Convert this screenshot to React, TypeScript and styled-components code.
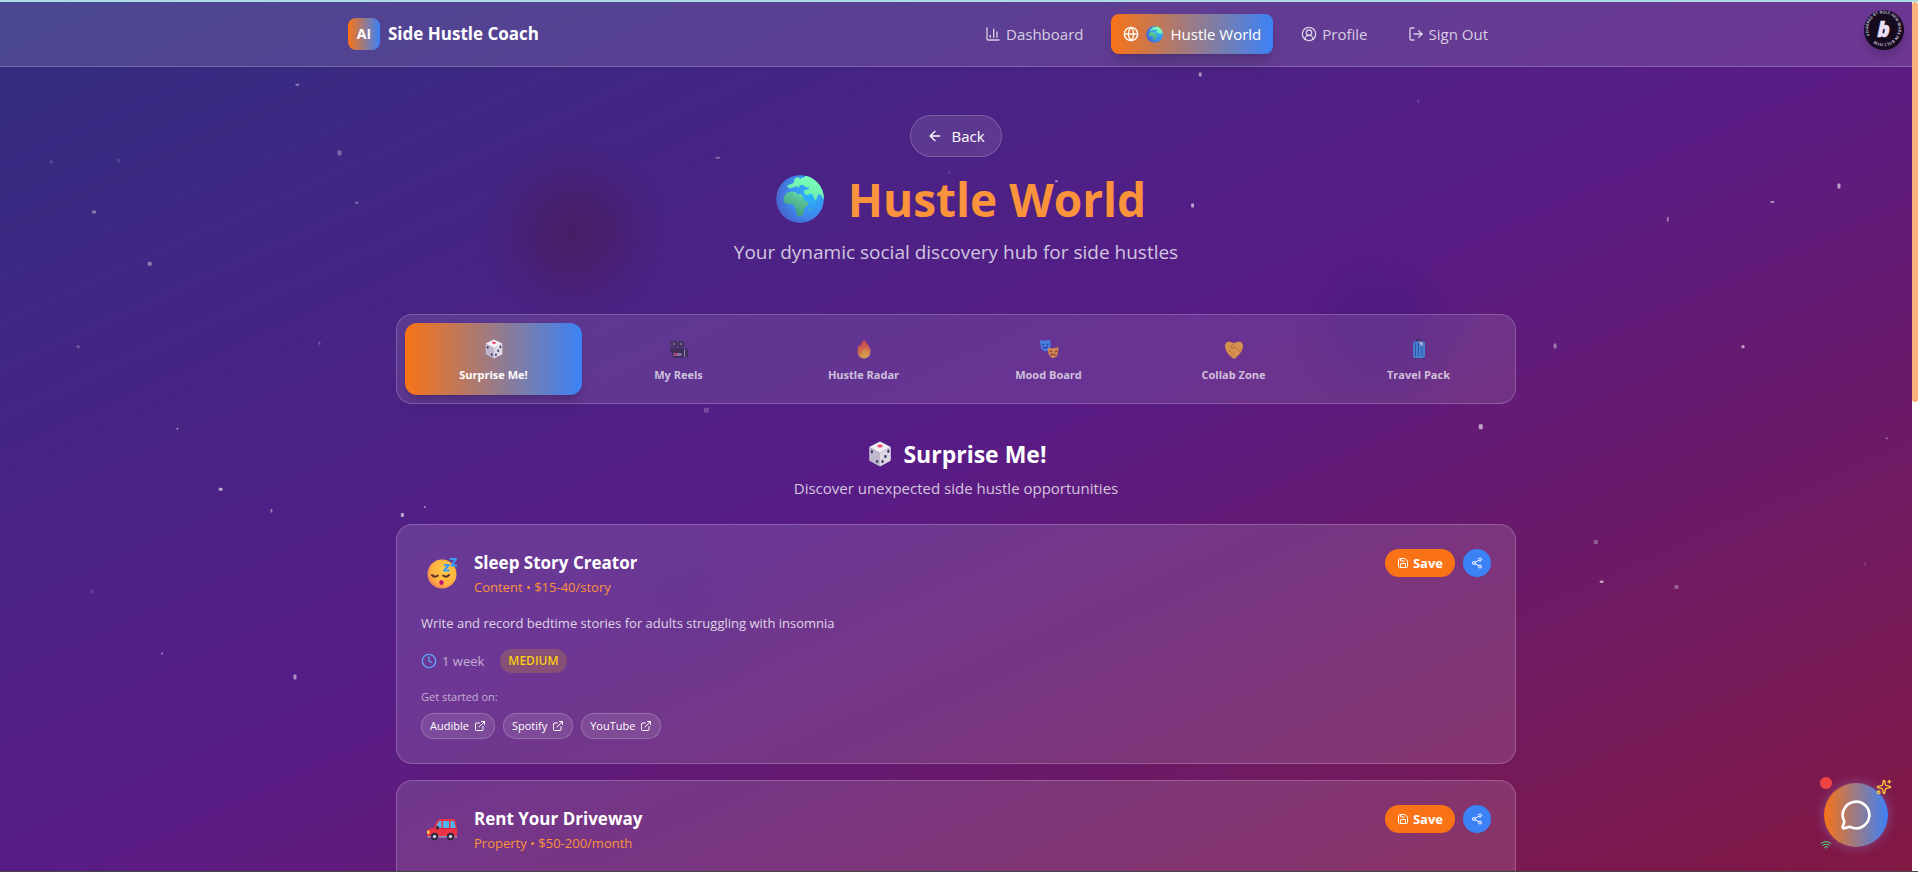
import React from "react";
import styled, { createGlobalStyle, css } from "styled-components";
import {
  ArrowLeft,
  ChartColumn,
  CircleUserRound,
  Clock,
  ExternalLink,
  Globe,
  LogOut,
  MessageCircle,
  Save,
  Share2,
  Sparkles,
  Wifi,
} from "lucide-react";

const GlobalStyle = createGlobalStyle`
  *, *::before, *::after { box-sizing: border-box; }
  body {
    margin: 0;
    color: #fff;
    background: #581c87;
    font-family: "Open Sans", "Noto Sans", sans-serif;
    font-size: 15px;
    line-height: 24px;
  }
  h1, h2, h3, p, ul { margin: 0; padding: 0; }
  button { font: inherit; color: inherit; border: 0; cursor: pointer; }
  a { color: inherit; text-decoration: none; }
  svg { flex-shrink: 0; }
`;

const accent = "linear-gradient(to right, #f97316, #3b82f6)";

/* ---------- page shell ---------- */

const Shell = styled.div`
  position: relative;
  height: 100vh;
  overflow: hidden;
  padding-right: 6px;
  border-top: 2px solid #acdbe2;
  border-bottom: 1px solid #454545;
  background: linear-gradient(to bottom right, #312e81, #581c87, #831843);
`;

const ScrollTrack = styled.div`
  position: absolute;
  inset: 0 0 0 auto;
  width: 6px;
  background: #fff;
`;

const ScrollThumb = styled.div`
  height: 46%;
  border-radius: 3px;
  background: #fdb17c;
`;

const Sky = styled.svg`
  position: absolute;
  inset: 0;
  width: 100%;
  height: 100%;
`;

/* ---------- header ---------- */

const Header = styled.header`
  position: relative;
  background: rgba(255, 255, 255, 0.12);
  border-bottom: 1px solid rgba(255, 255, 255, 0.2);
`;

const HeaderInner = styled.div`
  display: flex;
  align-items: center;
  justify-content: space-between;
  height: 64px;
  max-width: 1280px;
  margin: 0 auto;
  padding: 0 96px 0 32px;
`;

const Brand = styled.a`
  display: flex;
  align-items: center;
  gap: 8px;
  font-size: 17px;
  font-weight: 700;
`;

const BrandMark = styled.span`
  display: grid;
  place-items: center;
  width: 32px;
  height: 32px;
  border-radius: 8px;
  background: ${accent};
  font-size: 14px;
`;

const Nav = styled.nav`
  display: flex;
  gap: 16px;
`;

const NavLink = styled.a<{ $active?: boolean }>`
  display: flex;
  align-items: center;
  gap: 5px;
  height: 40px;
  padding: 0 12px;
  border-radius: 8px;
  color: rgba(255, 255, 255, 0.75);
  ${(p) =>
    p.$active &&
    css`
      gap: 7px;
      color: #fff;
      background: ${accent};
      box-shadow: 0 10px 15px -3px rgba(0, 0, 0, 0.15), 0 4px 6px -4px rgba(0, 0, 0, 0.15);
    `}
`;

/* ---------- hero ---------- */

const Main = styled.main`
  position: relative;
  display: flex;
  flex-direction: column;
  align-items: center;
  max-width: 1152px;
  margin: 0 auto;
  padding: 48px 16px;
`;

const BackButton = styled.button`
  display: flex;
  align-items: center;
  gap: 8px;
  height: 42px;
  padding: 0 16px;
  border: 1px solid rgba(255, 255, 255, 0.2);
  border-radius: 21px;
  background: rgba(255, 255, 255, 0.1);
`;

const Title = styled.h1`
  display: flex;
  align-items: center;
  gap: 24px;
  margin-top: 14px;
  padding-left: 10px;
  color: #fb923c;
  font-size: 46px;
  line-height: 56px;
  font-weight: 700;
`;

const Tagline = styled.p`
  margin: 11px 0 48px;
  color: rgba(255, 255, 255, 0.75);
  font-size: 19px;
  line-height: 28px;
`;

/* ---------- tabs ---------- */

const Tabs = styled.div`
  display: grid;
  grid-template-columns: repeat(6, 1fr);
  gap: 8px;
  width: 100%;
  padding: 8px;
  border: 1px solid rgba(255, 255, 255, 0.2);
  border-radius: 16px;
  background: rgba(255, 255, 255, 0.1);
`;

const Tab = styled.button<{ $active?: boolean }>`
  display: flex;
  flex-direction: column;
  align-items: center;
  gap: 4px;
  padding: 12px;
  border-radius: 12px;
  background: none;
  font-size: 11px;
  line-height: 16px;
  font-weight: 700;
  color: rgba(255, 255, 255, 0.7);
  svg {
    opacity: 0.75;
  }
  ${(p) =>
    p.$active &&
    css`
      color: #fff;
      background: ${accent};
      box-shadow: 0 10px 15px -3px rgba(0, 0, 0, 0.15), 0 4px 6px -4px rgba(0, 0, 0, 0.15);
      svg {
        opacity: 1;
      }
    `}
`;

const TabIcon = styled.span`
  display: grid;
  place-items: center;
  height: 28px;
`;

/* ---------- section and cards ---------- */

const SectionTitle = styled.h2`
  display: flex;
  align-items: center;
  gap: 10px;
  margin-top: 32px;
  padding-left: 2px;
  font-size: 23px;
  line-height: 36px;
`;

const SectionText = styled.p`
  margin: 4px 0 24px;
  color: rgba(255, 255, 255, 0.75);
`;

const CardList = styled.div`
  display: grid;
  gap: 16px;
  width: 100%;
`;

const Card = styled.article`
  display: flex;
  flex-direction: column;
  gap: 16px;
  min-height: 240px;
  padding: 24px;
  border: 1px solid rgba(255, 255, 255, 0.2);
  border-radius: 16px;
  background: rgba(255, 255, 255, 0.12);
`;

const CardHeader = styled.div`
  display: flex;
  align-items: flex-start;
  gap: 8px;
`;

const CardEmoji = styled.span`
  display: grid;
  place-items: center;
  width: 41px;
  height: 48px;
  margin-right: 4px;
`;

const CardHeading = styled.div`
  flex: 1;
`;

const CardTitle = styled.h3`
  font-size: 17px;
  line-height: 28px;
`;

const CardMeta = styled.p`
  color: #fb923c;
  font-size: 13px;
  line-height: 20px;
`;

const SaveButton = styled.button`
  display: flex;
  align-items: center;
  gap: 4px;
  height: 28px;
  padding: 0 12px;
  border-radius: 14px;
  background: #f97316;
  font-size: 13px;
  font-weight: 700;
`;

const ShareButton = styled.button`
  display: grid;
  place-items: center;
  width: 28px;
  height: 28px;
  padding: 0;
  border-radius: 50%;
  background: #3b82f6;
`;

const Description = styled.p`
  color: rgba(255, 255, 255, 0.8);
  font-size: 13px;
  line-height: 20px;
  font-weight: 500;
`;

const Facts = styled.div`
  display: flex;
  align-items: center;
  gap: 16px;
`;

const Duration = styled.span`
  display: flex;
  align-items: center;
  gap: 5px;
  color: rgba(255, 255, 255, 0.6);
  font-size: 13px;
  line-height: 20px;
  svg {
    color: #60a5fa;
  }
`;

const Level = styled.span`
  padding: 4px 8px;
  border-radius: 12px;
  background: rgba(234, 179, 8, 0.2);
  color: #facc15;
  font-size: 12px;
  line-height: 16px;
  font-weight: 600;
`;

const Platforms = styled.div`
  display: flex;
  flex-direction: column;
  gap: 8px;
  color: rgba(255, 255, 255, 0.6);
  font-size: 11px;
  line-height: 16px;
  font-weight: 500;
`;

const Chips = styled.div`
  display: flex;
  gap: 8px;
`;

const Chip = styled.a`
  display: flex;
  align-items: center;
  gap: 5px;
  height: 26px;
  padding: 0 8px;
  border: 1px solid rgba(255, 255, 255, 0.2);
  border-radius: 13px;
  background: rgba(255, 255, 255, 0.1);
  color: #fff;
`;

/* ---------- floating parts ---------- */

const BoltBadge = styled.a`
  position: absolute;
  top: 8px;
  right: 14px;
  width: 40px;
  height: 40px;
  border-radius: 50%;
  box-shadow: 0 6px 10px rgba(0, 0, 0, 0.15);
`;

const ChatDock = styled.div`
  position: absolute;
  right: 30px;
  bottom: 24px;
  width: 64px;
  height: 64px;
`;

const ChatButton = styled.button`
  display: grid;
  place-items: center;
  width: 100%;
  height: 100%;
  padding: 0;
  border-radius: 50%;
  background: ${accent};
  box-shadow: 0 0 12px rgba(140, 110, 180, 0.6);
`;

const Unread = styled.span`
  position: absolute;
  top: -6px;
  left: -4px;
  width: 12px;
  height: 12px;
  border-radius: 50%;
  background: #ef4444;
`;

const SparkleMark = styled(Sparkles)`
  position: absolute;
  top: -4px;
  right: -4px;
  color: #fac63c;
`;

const WifiMark = styled(Wifi)`
  position: absolute;
  bottom: -4px;
  left: -4px;
  color: #4ade80;
`;

/* ---------- drawings ---------- */

type Size = { size: number };

const Earth = ({ size }: Size) => (
  <svg width={size} height={size} viewBox="0 0 142 142" aria-hidden="true">
    <defs>
      <radialGradient id="sea" cx="0.72" cy="0.4" r="0.75">
        <stop offset="0" stopColor="#27b7ff" />
        <stop offset="0.55" stopColor="#3b8ef0" />
        <stop offset="1" stopColor="#4a5fcb" />
      </radialGradient>
      <linearGradient id="land" gradientUnits="userSpaceOnUse" x1="110" y1="15" x2="60" y2="125">
        <stop offset="0" stopColor="#7affb8" />
        <stop offset="0.4" stopColor="#70edb0" />
        <stop offset="0.5" stopColor="#5cc9a0" />
        <stop offset="1" stopColor="#3f9a78" />
      </linearGradient>
      <clipPath id="disc">
        <circle cx="71" cy="71" r="71" />
      </clipPath>
    </defs>
    <g clipPath="url(#disc)">
      <circle cx="71" cy="71" r="71" fill="url(#sea)" />
      <g fill="url(#land)">
        <path d="M54 12l9-6 8 4-4 10-8 2-5-4z" />
        <path d="M88 0Q136 0 148 62l-8 9-7-12-8-3-4 12-4 8-5-9-4-10-9-1-7 4-7-3-3-8 5-5 10-2 1-4-12-3-8-6-8 2-3 7-6-5-9 3-9 4-8-2-3-6 8-4 10-3 5-7 12-2 6-6 12-4z" />
        <path d="M24 64l8-11 14-4 13 1 3 6 14 1 5 12 6 9 10 1-3 10-10 9-2 13-5 9-7 3-7-3-3-15-5-12-7-8H29l-7-10z" />
        <path d="M99 98l4-2-1 9-4 2z" />
      </g>
    </g>
  </svg>
);

const Dice = ({ size }: Size) => (
  <svg width={size} height={size} viewBox="0 0 24 24" aria-hidden="true">
    <path d="M12 .5L22 5.500 12 11 2 5.500z" fill="#f1edf3" />
    <path d="M2 5.500L12 11v12.500L3 18.800Q2 18.300 2 17z" fill="#bdb8cb" />
    <path d="M22 5.500L12 11v12.500l9-4.700q1-.5 1-1.800z" fill="#ddd9e4" />
    <ellipse cx="12" cy="4.600" rx="2.300" ry="1.400" fill="#f8436b" />
    <g fill="#433b6b">
      <ellipse cx="4.500" cy="10" rx="1.100" ry="1.600" />
      <ellipse cx="9.300" cy="18.800" rx="1.100" ry="1.600" />
      <ellipse cx="19.700" cy="9.500" rx="1.100" ry="1.600" />
      <ellipse cx="17" cy="14.200" rx="1.100" ry="1.600" />
      <ellipse cx="14.300" cy="19" rx="1.100" ry="1.600" />
    </g>
  </svg>
);

const Camera = () => (
  <svg width="20" height="20" viewBox="0 0 20 20" aria-hidden="true">
    <circle cx="5" cy="5" r="3.500" fill="#3d3550" />
    <circle cx="12" cy="5" r="3.500" fill="#3d3550" />
    <circle cx="5" cy="5" r="1.200" fill="#7d7590" />
    <circle cx="12" cy="5" r="1.200" fill="#7d7590" />
    <path d="M1 9h14v10H3.500L3 14 1 13z" fill="#352d48" />
    <path d="M15.500 12l3.500-3v10l-3.500-3z" fill="#352d48" />
    <path d="M15.500 11v6.500" stroke="#b7afc8" />
    <rect x="4.500" y="14" width="8" height="3" fill="#8f86a8" />
    <rect x="5" y="14" width="3" height="2.500" fill="#d4386c" />
  </svg>
);

const Flame = () => (
  <svg width="20" height="20" viewBox="0 0 20 20" aria-hidden="true">
    <defs>
      <linearGradient id="fire" x1="0.4" y1="0" x2="0.6" y2="1">
        <stop offset="0" stopColor="#e8413c" />
        <stop offset="0.55" stopColor="#f07a35" />
        <stop offset="1" stopColor="#ffd23e" />
      </linearGradient>
    </defs>
    <path d="M10.500.5c1 3.500 6 6.500 6 12 0 4-3 7-6.500 7s-6.500-3-6.500-7c0-3 1-5.500 2-7 .5 1 .5 1.500 1 2 .5-3 2-5.500 4-7z" fill="url(#fire)" />
    <path d="M11 9c2 2 3 4 2.500 6.500S10 18.500 8 17s-1-5 3-8z" fill="#ffb938" opacity="0.6" />
  </svg>
);

const Masks = () => (
  <svg width="20" height="20" viewBox="0 0 20 20" aria-hidden="true">
    <path d="M1 1q5 1.500 10-.5 1.500 7-1 11-5 2-7.500-1.500Q1 7 1 1z" fill="#3f93f5" />
    <path d="M3 5.500l2 .5M7.500 5.500l2-.5M3.500 8q3 2 5.500-.5" stroke="#1c3f9e" strokeWidth="1.200" fill="none" />
    <path d="M9 9q5 1 10.500-1-.5 7-2 9.500-3 2.500-6 .5Q8.500 15 9 9z" fill="#f5a03f" />
    <path d="M11 12l2 1M16 13l2-1M11.500 16.500q2.500-3 5 0" stroke="#7a3014" strokeWidth="1.200" fill="none" />
  </svg>
);

const Handshake = () => (
  <svg width="20" height="20" viewBox="0 0 20 20" aria-hidden="true">
    <path d="M1 7q0-4 4-4.500L10 4l5-1.500Q19 3 19 7q0 4-3 7.500L11.500 19q-1.500 1-3 0L4 15Q1 11 1 7z" fill="#fbb03b" />
    <path d="M10 4L6.500 8q1 2 4 0l6 5.500M5 13l2-2M7 15.500l2-2M9 17.500l2-2" stroke="#c9791f" strokeWidth="0.800" fill="none" />
  </svg>
);

const Luggage = () => (
  <svg width="20" height="20" viewBox="0 0 20 20" aria-hidden="true">
    <path d="M8 3V.8h4V3" stroke="#3b3452" strokeWidth="1.400" fill="none" />
    <rect x="4" y="2.500" width="12" height="16.500" rx="2" fill="#3a9ae8" />
    <path d="M6.500 4v13M9.500 4v13M13 7v10" stroke="#2560b0" strokeWidth="1" />
    <path d="M10 2.500l3.500 1v4l-2-2z" fill="#e5d5e8" />
    <path d="M5 19.500h3M12.500 19.500h3" stroke="#3b3452" />
  </svg>
);

const SleepyFace = () => (
  <svg width="32" height="32" viewBox="0 0 32 32" aria-hidden="true">
    <defs>
      <radialGradient id="skin" cx="0.6" cy="0.4" r="0.65">
        <stop offset="0" stopColor="#ffcb4a" />
        <stop offset="0.7" stopColor="#ffb13d" />
        <stop offset="1" stopColor="#f0805a" />
      </radialGradient>
    </defs>
    <circle cx="16" cy="17" r="14.500" fill="url(#skin)" />
    <path d="M6 18q2.500 3 6 .5M17 18.500q3.500 2.500 6-.5" stroke="#5a3428" strokeWidth="2" strokeLinecap="round" fill="none" />
    <ellipse cx="15.500" cy="25.500" rx="2.200" ry="2.600" fill="#c0127c" />
    <g stroke="#3a9cf5" strokeWidth="2" fill="none" strokeLinejoin="round">
      <path d="M24 2h6l-4.500 6.500H31" />
      <path d="M18 8h5l-5 5.500h5.500" />
    </g>
  </svg>
);

const Car = () => (
  <svg width="32" height="32" viewBox="0 0 32 32" aria-hidden="true">
    <path d="M10.500 9Q12 6 14.500 6H27q2 0 2.500 2L31 16v6q0 2-2 2H3q-2 0-2-2v-3q0-3 3-3.500L7.500 15z" fill="#ec3345" />
    <path d="M9.500 15L12.500 9q.5-1 1.500-1h1.500v7zM17 8h6v7h-6zM24.500 8H27q1 0 1.300 1l1.500 6h-5.300z" fill="#4fb4f4" />
    <path d="M8 15.500h23" stroke="#c71f3c" strokeWidth="0.800" />
    <rect x="10" y="13" width="3" height="3.500" rx="1" fill="#4b2438" />
    <rect x="1" y="17.500" width="2.500" height="3.500" rx="1" fill="#ffd33f" />
    <path d="M1 23h30v1.500H2z" fill="#9b93ad" />
    <circle cx="8.500" cy="23.500" r="3.700" fill="#2e2740" />
    <circle cx="24.500" cy="23.500" r="3.700" fill="#2e2740" />
    <circle cx="8.500" cy="23.500" r="1.700" fill="#cfc9dc" />
    <circle cx="24.500" cy="23.500" r="1.700" fill="#cfc9dc" />
  </svg>
);

const BoltMark = () => (
  <svg width="40" height="40" viewBox="0 0 40 40" aria-hidden="true">
    <defs>
      <path id="ring" d="M5.900 25.100A15 15 0 1 1 5.910 25.120" />
    </defs>
    <circle cx="20" cy="20" r="20" fill="#150a1e" />
    <text fill="#d8cfe4" fontSize="4" fontWeight="600">
      <textPath href="#ring">POWERED BY BOLT.NEW MADE IN BOLT.NEW</textPath>
    </text>
    <text x="19.500" y="27" textAnchor="middle" fill="#eadff5" stroke="#eadff5" strokeWidth="0.500" fontSize="21" fontStyle="italic" fontWeight="800">
      b
    </text>
  </svg>
);

/* x and y in percent of the window, width and height in pixels, opacity */
const stars: [number, number, number, number, number][] = [
  [15.4, 9.4, 4, 2, 0.4], [17.6, 17.1, 4, 5, 0.3], [2.6, 18.2, 3, 3, 0.15], [6.1, 18, 3, 4, 0.12],
  [4.8, 24, 4, 3, 0.4], [18.5, 23, 4, 2, 0.3], [7.7, 29.9, 4, 4, 0.4], [4, 39.5, 3, 3, 0.25],
  [16.6, 39.1, 2, 3, 0.25], [9.2, 49, 2, 2, 0.5], [11.4, 55.9, 4, 3, 0.6], [14.1, 58.3, 2, 4, 0.4],
  [20.9, 58.8, 3, 4, 0.6], [22.1, 58, 2, 2, 0.5], [4.7, 67.6, 3, 4, 0.15], [8.4, 74.8, 2, 3, 0.3],
  [15.3, 77.4, 3, 5, 0.5], [37.3, 17.8, 5, 2, 0.3], [62.5, 8.1, 3, 4, 0.5], [73.9, 11.2, 2, 4, 0.15],
  [55, 20.5, 3, 2, 0.5], [49.4, 19.5, 3, 2, 0.15], [62.1, 23.2, 3, 4, 0.6], [95.8, 20.9, 3, 5, 0.6],
  [92.3, 22.9, 4, 2, 0.5], [86.9, 24.7, 2, 5, 0.4], [81, 39.3, 3, 5, 0.4], [90.8, 39.5, 3, 3, 0.6],
  [77.1, 48.6, 4, 5, 0.6], [36.7, 46.7, 5, 5, 0.2], [98.3, 50.1, 3, 2, 0.3], [83.1, 61.9, 4, 4, 0.3],
  [97.2, 64.4, 2, 4, 0.15], [83.4, 66.6, 4, 2, 0.7], [87.3, 67.1, 4, 4, 0.3],
];

const Backdrop = () => (
  <Sky aria-hidden="true">
    <defs>
      <radialGradient id="emberGlow">
        <stop offset="0" stopColor="#471b5a" stopOpacity="0.75" />
        <stop offset="0.45" stopColor="#471b60" stopOpacity="0.5" />
        <stop offset="0.75" stopColor="#471b66" stopOpacity="0.16" />
        <stop offset="1" stopColor="#471b66" stopOpacity="0" />
      </radialGradient>
      <radialGradient id="blueGlow">
        <stop offset="0" stopColor="#45187f" stopOpacity="0.6" />
        <stop offset="0.45" stopColor="#45187f" stopOpacity="0.4" />
        <stop offset="0.75" stopColor="#45187f" stopOpacity="0.12" />
        <stop offset="1" stopColor="#45187f" stopOpacity="0" />
      </radialGradient>
    </defs>
    <circle cx="29.900%" cy="26.600%" r="96" fill="url(#emberGlow)" />
    <circle cx="71.900%" cy="38%" r="96" fill="url(#blueGlow)" />
    <circle cx="35.900%" cy="69%" r="96" fill="url(#blueGlow)" opacity="0.5" />
    {stars.map(([x, y, w, h, o]) => (
      <rect key={`${x}-${y}`} x={`${x}%`} y={`${y}%`} width={w} height={h} rx="1" fill="#fff" opacity={o} />
    ))}
  </Sky>
);

/* ---------- content ---------- */

const tabs = [
  { label: "Surprise Me!", icon: <Dice size={20} /> },
  { label: "My Reels", icon: <Camera /> },
  { label: "Hustle Radar", icon: <Flame /> },
  { label: "Mood Board", icon: <Masks /> },
  { label: "Collab Zone", icon: <Handshake /> },
  { label: "Travel Pack", icon: <Luggage /> },
];

type Hustle = {
  title: string;
  meta: string;
  emoji: React.ReactNode;
  details?: { text: string; time: string; level: string; platforms: string[] };
};

const hustles: Hustle[] = [
  {
    title: "Sleep Story Creator",
    meta: "Content • $15-40/story",
    emoji: <SleepyFace />,
    details: {
      text: "Write and record bedtime stories for adults struggling with insomnia",
      time: "1 week",
      level: "MEDIUM",
      platforms: ["Audible", "Spotify", "YouTube"],
    },
  },
  { title: "Rent Your Driveway", meta: "Property • $50-200/month", emoji: <Car /> },
];

const HustleCard = ({ title, meta, emoji, details }: Hustle) => (
  <Card>
    <CardHeader>
      <CardEmoji>{emoji}</CardEmoji>
      <CardHeading>
        <CardTitle>{title}</CardTitle>
        <CardMeta>{meta}</CardMeta>
      </CardHeading>
      <SaveButton type="button">
        <Save size={12} />
        Save
      </SaveButton>
      <ShareButton type="button" aria-label="Share">
        <Share2 size={12} />
      </ShareButton>
    </CardHeader>
    {details && (
      <>
        <Description>{details.text}</Description>
        <Facts>
          <Duration>
            <Clock size={16} />
            {details.time}
          </Duration>
          <Level>{details.level}</Level>
        </Facts>
        <Platforms>
          <p>Get started on:</p>
          <Chips>
            {details.platforms.map((name) => (
              <Chip key={name} href="#">
                {name}
                <ExternalLink size={12} />
              </Chip>
            ))}
          </Chips>
        </Platforms>
      </>
    )}
  </Card>
);

export default function App() {
  return (
    <Shell>
      <GlobalStyle />
      <Backdrop />
      <Header>
        <HeaderInner>
          <Brand href="#">
            <BrandMark>AI</BrandMark>
            Side Hustle Coach
          </Brand>
          <Nav>
            <NavLink href="#">
              <ChartColumn size={16} />
              Dashboard
            </NavLink>
            <NavLink href="#" $active>
              <Globe size={16} />
              <Earth size={17} />
              Hustle World
            </NavLink>
            <NavLink href="#">
              <CircleUserRound size={16} />
              Profile
            </NavLink>
            <NavLink href="#">
              <LogOut size={16} />
              Sign Out
            </NavLink>
          </Nav>
        </HeaderInner>
      </Header>
      <Main>
        <BackButton type="button">
          <ArrowLeft size={16} />
          Back
        </BackButton>
        <Title>
          <Earth size={48} />
          Hustle World
        </Title>
        <Tagline>Your dynamic social discovery hub for side hustles</Tagline>
        <Tabs>
          {tabs.map(({ label, icon }, i) => (
            <Tab key={label} type="button" $active={i === 0}>
              <TabIcon>{icon}</TabIcon>
              {label}
            </Tab>
          ))}
        </Tabs>
        <SectionTitle>
          <Dice size={26} />
          Surprise Me!
        </SectionTitle>
        <SectionText>Discover unexpected side hustle opportunities</SectionText>
        <CardList>
          {hustles.map((h) => (
            <HustleCard key={h.title} {...h} />
          ))}
        </CardList>
      </Main>
      <BoltBadge href="#" aria-label="Powered by Bolt">
        <BoltMark />
      </BoltBadge>
      <ChatDock>
        <ChatButton type="button" aria-label="Open chat">
          <MessageCircle size={32} />
        </ChatButton>
        <Unread />
        <SparkleMark size={16} />
        <WifiMark size={12} />
      </ChatDock>
      <ScrollTrack>
        <ScrollThumb />
      </ScrollTrack>
    </Shell>
  );
}
